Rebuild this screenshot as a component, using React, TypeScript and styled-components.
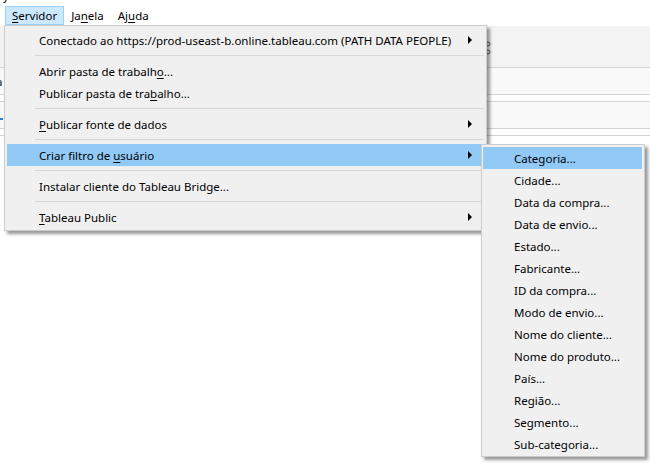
import React from 'react';
import styled, { createGlobalStyle } from 'styled-components';

const Global = createGlobalStyle`
  html, body { margin: 0; padding: 0; background: #ffffff; }
  body {
    font-family: "Noto Sans", "Open Sans", "DejaVu Sans", sans-serif;
    font-size: 11.5px;
    color: #000000;
  }
  #root { width: 650px; height: 467px; overflow: hidden; }
`;

const Page = styled.div`
  position: relative;
  width: 650px;
  height: 467px;
  overflow: hidden;
  background: #ffffff;
`;

const TopClip = styled.div`
  height: 6px;
  overflow: hidden;
  padding-left: 3px;
`;

const ClippedText = styled.div`
  line-height: 16px;
  margin-top: -12px;
`;

const MenuBar = styled.div`
  display: flex;
  align-items: flex-start;
  height: 20px;
  padding-left: 5px;
`;

const BarItem = styled.div<{ $active?: boolean }>`
  height: 17px;
  line-height: 17px;
  padding: 0 6px;
  border: 1px solid ${(p) => (p.$active ? '#99d1ff' : 'transparent')};
  background: ${(p) => (p.$active ? '#cce8ff' : 'transparent')};
  white-space: nowrap;
`;

const Key = styled.span`
  text-decoration: underline;
  text-underline-offset: 2px;
  text-decoration-thickness: 1px;
`;

const Band = styled.div<{ $h: number; $bg: string }>`
  display: flex;
  align-items: center;
  height: ${(p) => p.$h}px;
  background: ${(p) => p.$bg};
  border-bottom: 1px solid #d4d4d4;
`;

const ToolIcon = styled.svg`
  margin-left: 485px;
  margin-top: 3px;
`;

const CutText = styled.span`
  margin-left: -4px;
  color: #222;
`;

const BlueTick = styled.span`
  display: block;
  width: 3px;
  height: 2px;
  margin-top: 8px;
  background: #2f7fd8;
`;

const DropMenu = styled.div`
  position: absolute;
  left: 4px;
  top: 25px;
  width: 483px;
  box-sizing: border-box;
  background: #f0f0f0;
  border: 1px solid #cccccc;
  padding: 3px 0 2px;
  box-shadow: 3px 3px 3px rgba(0, 0, 0, 0.4);
  z-index: 2;
`;

const SubMenu = styled(DropMenu)`
  left: 481px;
  top: 144px;
  width: 164px;
  padding: 2px 0 1px;
  z-index: 3;
`;

const Item = styled.div<{ $hi?: boolean; $indent: number }>`
  display: flex;
  align-items: center;
  height: 22px;
  margin: 0 2px 0 ${(p) => (p.$indent === 31 ? 1 : 2)}px;
  padding-left: ${(p) => p.$indent}px;
  padding-right: 11px;
  background: ${(p) => (p.$hi ? '#91c9f7' : 'transparent')};
  white-space: nowrap;
`;

const Label = styled.span`
  flex: 1;
`;

const Sep = styled.div`
  height: 9px;
  padding: 4px 2px 0 30px;
  box-sizing: border-box;
  &::after {
    content: '';
    display: block;
    height: 1px;
    background: #d7d7d7;
  }
`;

const Arrow = () => (
  <svg width="5" height="8" viewBox="0 0 5 8">
    <polygon points="0,0 4,4 0,8" fill="#000" />
  </svg>
);

const subItems = [
  'Categoria...',
  'Cidade...',
  'Data da compra...',
  'Data de envio...',
  'Estado...',
  'Fabricante...',
  'ID da compra...',
  'Modo de envio...',
  'Nome do cliente...',
  'Nome do produto...',
  'País...',
  'Região...',
  'Segmento...',
  'Sub-categoria...',
];

export default function App() {
  return (
    <Page>
      <Global />
      <TopClip>
        <ClippedText>y</ClippedText>
      </TopClip>
      <MenuBar>
        <BarItem $active>
          <Key>S</Key>ervidor
        </BarItem>
        <BarItem>
          Ja<Key>n</Key>ela
        </BarItem>
        <BarItem>
          Aj<Key>u</Key>da
        </BarItem>
      </MenuBar>
      <Band $h={41} $bg="#f3f3f3">
        <ToolIcon width="6" height="16" viewBox="0 0 6 16">
          <circle cx="3" cy="4" r="2" fill="none" stroke="#555" strokeWidth="1" />
          <circle cx="3" cy="12" r="2" fill="none" stroke="#555" strokeWidth="1" />
        </ToolIcon>
      </Band>
      <Band $h={26} $bg="#f9f9f9">
        <CutText>a</CutText>
      </Band>
      <Band $h={6} $bg="#ffffff" />
      <Band $h={26} $bg="#f9f9f9">
        <BlueTick />
      </Band>
      <Band $h={6} $bg="#ffffff" />

      <DropMenu>
        <Item $indent={32}>
          <Label>Conectado ao https://prod-useast-b.online.tableau.com (PATH DATA PEOPLE)</Label>
          <Arrow />
        </Item>
        <Sep />
        <Item $indent={32}>
          <Label>
            Abrir pasta de trabalh<Key>o</Key>...
          </Label>
        </Item>
        <Item $indent={32}>
          <Label>
            Publicar pasta de tra<Key>b</Key>alho...
          </Label>
        </Item>
        <Sep />
        <Item $indent={32}>
          <Label>
            <Key>P</Key>ublicar fonte de dados
          </Label>
          <Arrow />
        </Item>
        <Sep />
        <Item $indent={32} $hi>
          <Label>
            Criar filtro de <Key>u</Key>suário
          </Label>
          <Arrow />
        </Item>
        <Sep />
        <Item $indent={32}>
          <Label>Instalar cliente do Tableau Bridge...</Label>
        </Item>
        <Sep />
        <Item $indent={32}>
          <Label>
            <Key>T</Key>ableau Public
          </Label>
          <Arrow />
        </Item>
      </DropMenu>

      <SubMenu>
        {subItems.map((s, i) => (
          <Item key={s} $indent={31} $hi={i === 0}>
            <Label>{s}</Label>
          </Item>
        ))}
      </SubMenu>
    </Page>
  );
}
